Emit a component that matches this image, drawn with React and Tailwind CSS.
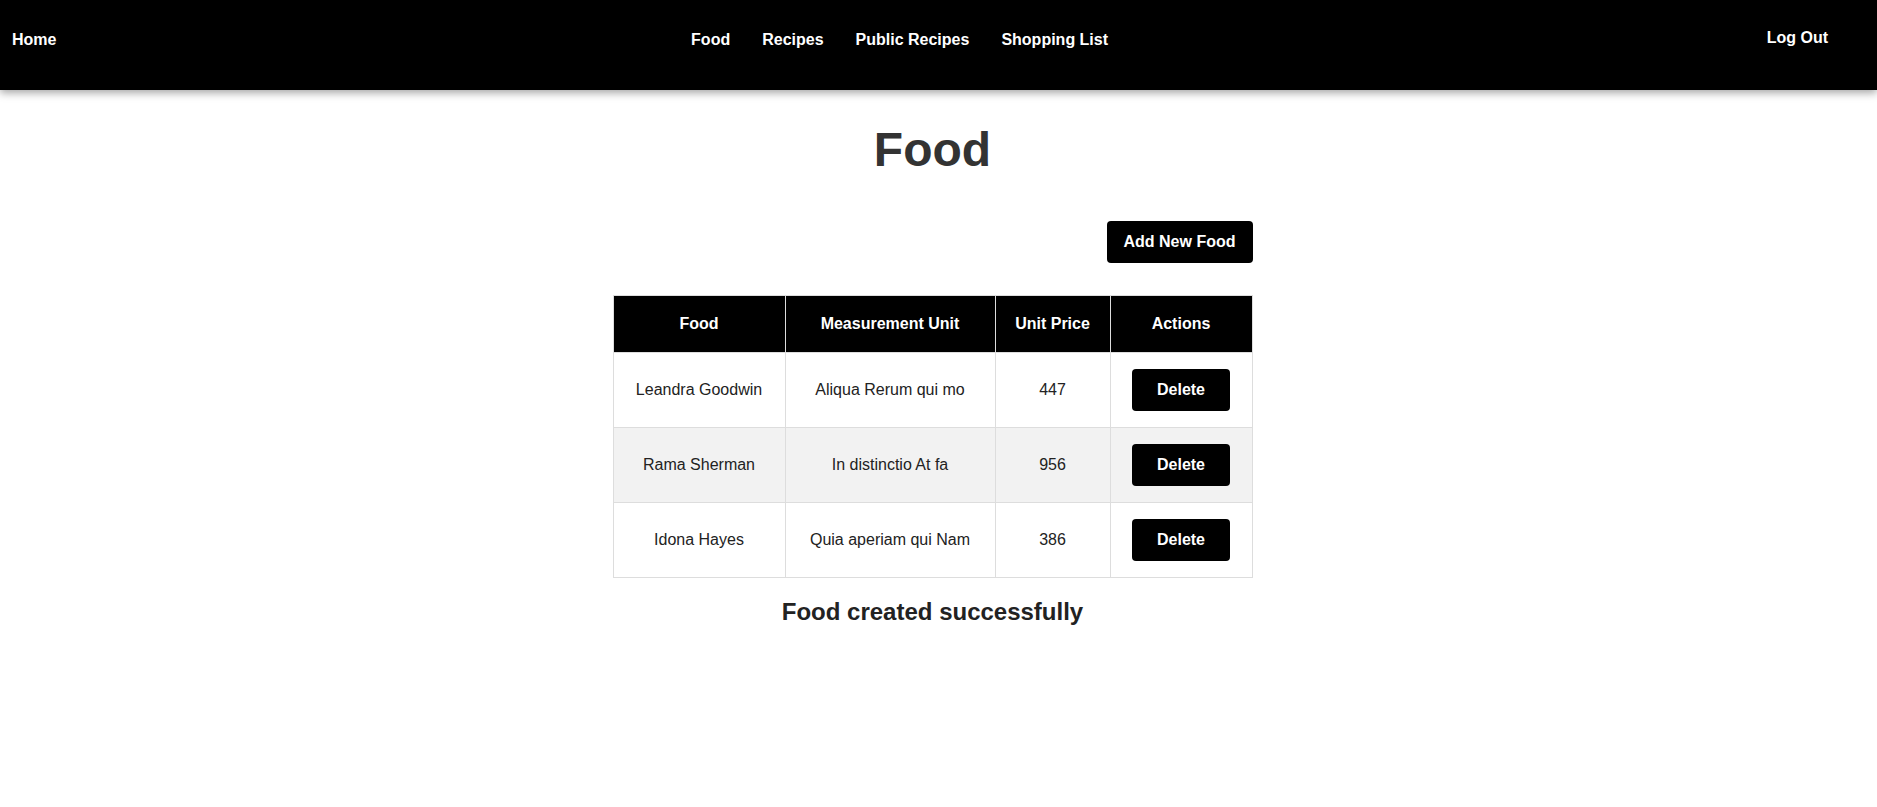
import { useState } from 'react';

const foods = [
  { id: 1, name: 'Leandra Goodwin', unit: 'Aliqua Rerum qui mo', price: 447 },
  { id: 2, name: 'Rama Sherman', unit: 'In distinctio At fa', price: 956 },
  { id: 3, name: 'Idona Hayes', unit: 'Quia aperiam qui Nam', price: 386 },
];

const Navbar = () => {
  return (
    <nav className="relative z-10 flex h-[90px] items-center justify-between bg-black pb-[10px] text-white shadow-[0_3px_8px_rgba(0,0,0,0.35)]">
      <a href="#" className="ml-3 text-base font-bold">
        Home
      </a>
      <ul className="mr-6 flex items-center gap-8 text-base font-bold">
        <li><a href="#">Food</a></li>
        <li><a href="#">Recipes</a></li>
        <li><a href="#">Public Recipes</a></li>
        <li><a href="#">Shopping List</a></li>
      </ul>
      <button className="mb-[5px] mr-[49px] text-base font-bold">Log Out</button>
    </nav>
  );
};

const App = () => {
  const [items, setItems] = useState(foods);

  const removeItem = (id) => {
    setItems(items.filter((f) => f.id !== id));
  };

  return (
    <div className="min-h-screen bg-white font-['Liberation_Sans',Arial,sans-serif]">
      <Navbar />
      <main className="flex flex-col items-center pr-3">
        <h1 className="mt-[32px] text-[48px] leading-[55px] font-bold text-[#333]">Food</h1>
        <div className="mt-[44px] flex w-[640px] justify-end">
          <button className="rounded-[4px] bg-black px-[17px] py-3 text-base leading-[18px] font-bold text-white">
            Add New Food
          </button>
        </div>
        <table className="mt-8 w-[640px] border-collapse text-center text-base text-[#222]">
          <thead>
            <tr className="bg-black text-white">
              <th className="w-[172px] border border-[#ddd] p-4 leading-6 font-bold">Food</th>
              <th className="w-[210px] border border-[#ddd] p-4 leading-6 font-bold">Measurement Unit</th>
              <th className="w-[115px] border border-[#ddd] p-4 leading-6 font-bold">Unit Price</th>
              <th className="border border-[#ddd] p-4 leading-6 font-bold">Actions</th>
            </tr>
          </thead>
          <tbody>
            {items.map((food, i) => (
              <tr key={food.id} className={i % 2 === 1 ? 'bg-[#f2f2f2]' : 'bg-white'}>
                <td className="border border-[#ddd] p-4">{food.name}</td>
                <td className="border border-[#ddd] p-4">{food.unit}</td>
                <td className="border border-[#ddd] p-4">{food.price}</td>
                <td className="border border-[#ddd] p-4">
                  <button
                    onClick={() => removeItem(food.id)}
                    className="w-[98px] rounded-[4px] bg-black py-3 text-base leading-[18px] font-bold text-white"
                  >
                    Delete
                  </button>
                </td>
              </tr>
            ))}
          </tbody>
        </table>
        <h3 className="mt-5 text-2xl leading-[28px] font-bold text-[#222]">Food created successfully</h3>
      </main>
    </div>
  );
};

export default App;
